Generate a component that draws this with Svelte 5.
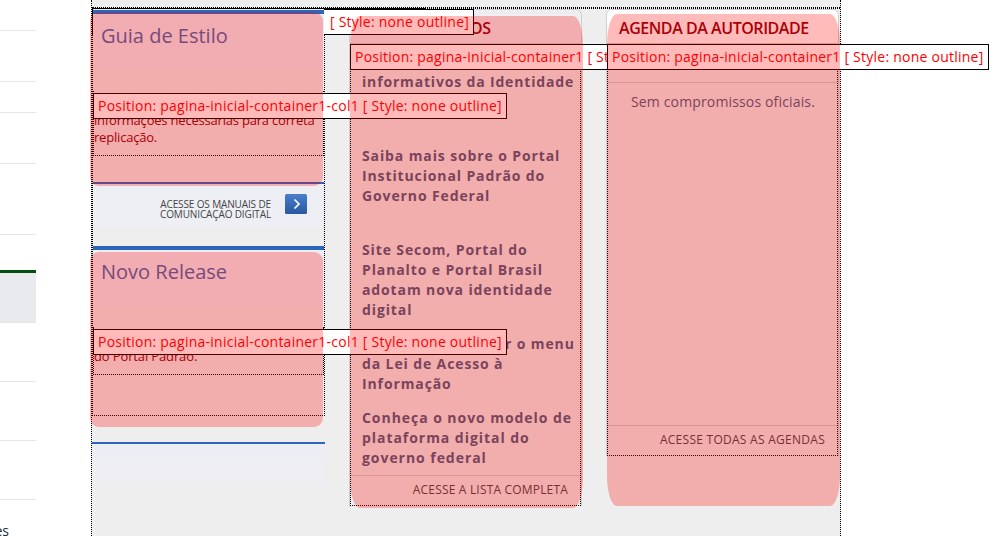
<script>
  const rows = [
    { h: 30 }, { h: 50 }, { h: 30 }, { h: 50 }, { h: 70 },
    { h: 35, plain: true },
    { h: 49, active: true },
    { h: 58 }, { h: 58 }, { h: 58 },
  ];
  const news = [
    { lines: ['Saiba mais sobre o Portal', 'Institucional Padrão do', 'Governo Federal'], gap: 34 },
    { lines: ['Site Secom, Portal do', 'Planalto e Portal Brasil', 'adotam nova identidade', 'digital'], gap: 14 },
    { lines: ['r o menu', 'da Lei de Acesso à', 'Informação'], gap: 14, indent: 143 },
    { lines: ['Conheça o novo modelo de', 'plataforma digital do', 'governo federal'], gap: 0, wide: true },
  ];
</script>

<div class="page">
  <nav>
    {#each rows as r}
      <div class="row" class:active={r.active} class:plain={r.plain} style:height="{r.h}px"></div>
    {/each}
    <span class="item">es</span>
  </nav>

  <main>
    <section class="col first">
      <div class="tiles">
        <article class="tile">
          <h2>Guia de Estilo</h2>
          <div class="body"><p>informações necessárias para correta<br />replicação.</p></div>
        </article>
        <div class="more">
          <span>ACESSE OS MANUAIS DE<br />COMUNICAÇÃO DIGITAL</span>
          <svg width="22" height="20" viewBox="0 0 22 20">
            <defs><linearGradient id="g" x2="0" y2="1"><stop stop-color="#4a7fcd" /><stop offset="1" stop-color="#2858a0" /></linearGradient></defs>
            <rect width="22" height="20" rx="1.5" fill="url(#g)" />
            <path d="M9.500 5.500 14 10l-4.500 4.500" fill="none" stroke="#fff" stroke-width="1.700" />
          </svg>
        </div>
        <article class="tile second">
          <h2>Novo Release</h2>
          <div class="body"><p>do Portal Padrão.</p></div>
        </article>
      </div>
      <div class="empty"></div>
    </section>

    <section class="col panel">
      <header class="tinted">OS</header>
      <div class="content">
        <b class="lead">informativos da Identidade</b>
        {#each news as n}
          <b class:wide={n.wide} style:margin-bottom="{n.gap}px">
            {#each n.lines as line, i}<span style:padding-left="{i === 0 && n.indent ? n.indent : 0}px">{line}</span>{/each}
          </b>
        {/each}
        <footer>ACESSE A LISTA COMPLETA</footer>
      </div>
    </section>

    <section class="col panel agenda">
      <header>AGENDA DA AUTORIDADE</header>
      <div class="content">
        <div class="date"></div>
        <p class="none">Sem compromissos oficiais.</p>
        <footer>ACESSE TODAS AS AGENDAS</footer>
      </div>
    </section>
  </main>

  <div class="edge"></div>
  <div class="tag t0"><span>[ Style: none outline]</span></div>
  <div class="tag t1"><span>Position: pagina-inicial-container1-col1 [ Style: none outline]</span></div>
  <div class="tag t2"><span>Position: pagina-inicial-container1-col1 [ Style: none outline]</span></div>
  <div class="tag t3"><span>Position: pagina-inicial-container1 [ Style: none outline]</span></div>
  <div class="tag t4"><span>Position: pagina-inicial-container1 [ Style: none outline]</span></div>
  <div class="mark m1"></div>
  <div class="mark m2"></div>
  <div class="mark m3"></div>
  <div class="mark m4"></div>
</div>

<style>
  * { box-sizing: border-box; margin: 0; }
  .page { position: relative; display: flex; width: 1003px; height: 536px; overflow: hidden; background: #fff; font: 14px/20px "Open Sans", sans-serif; white-space: nowrap; }
  nav { width: 36px; margin-right: 55px; overflow: hidden; }
  .row { box-sizing: content-box; border-bottom: 1px solid #e5e5e5; }
  .row.plain { border: 0; }
  .row.active { border-top: 3px solid #00500f; background: #e9eaee; }
  .item { display: block; width: 9px; margin-top: 21px; color: #172938; direction: rtl; }

  main { display: grid; grid-template-columns: 233px 233px 233px; grid-template-rows: 2px 1fr; column-gap: 24px; width: 750px; height: 536px; padding-top: 7px; background: #eee; border: 1px dotted #000; border-width: 0 1px; }
  main::before { content: ""; box-sizing: border-box; grid-column: 1 / 4; width: 748px; height: 2px; border: 1px dotted #000; border-width: 1px 0; }
  .tiles { height: 407px; padding-top: 1px; border: 1px dotted #000; border-top: 0; }
  .tile { height: 174px; border-top: 4px solid #2c66bc; border-bottom: 2px solid #2c66bc; background: linear-gradient(#eceef3 56px, #eee 56px); }
  .tile.second { height: 169px; border-bottom: 0; }
  h2 { height: 77px; padding: 9px 0 0 8px; font-size: 20px; line-height: 26px; font-weight: 400; color: #4566ab; }
  .body { height: 65px; padding-top: 21px; border: 1px dotted #000; border-top: 0; }
  .second .body { height: 48px; padding-top: 21px; }
  .body p { font-size: 13px; line-height: 17px; color: #8c0008; letter-spacing: -.2px; }
  .second p { letter-spacing: -.13px; }
  .more { display: flex; justify-content: flex-end; gap: 14px; height: 62px; padding: 10px 17px 0 0; background: linear-gradient(#edeff4 42px, #eee 42px); font-size: 10px; line-height: 10px; letter-spacing: -.13px; text-align: right; color: #444; }
  .more span { padding-top: 5px; }
  .empty { height: 45px; margin-top: 26px; border-top: 2px solid #2c66bc; background: linear-gradient(#edeef4, #eeeef2); }

  .panel { height: 497px; border: 1px solid #d0cece; border-bottom: 0; border-radius: 6px 6px 0 0; }
  header { height: 34px; padding: 8px 0 0 12px; border-bottom: 1px solid #ccc; border-radius: 5px 5px 0 0; background: #fff; color: #8b0009; font-size: 16px; line-height: 21px; font-weight: 600; letter-spacing: -.45px; }
  header.tinted { padding-left: 120px; background: #ededf2; }
  .content { display: flex; flex-direction: column; width: 231px; height: 462px; border: 1px dotted #000; border-top: 0; }
  .content b { display: flex; flex-direction: column; padding-left: 11px; color: #495d7e; letter-spacing: .88px; }
  .content .lead { margin: 28px 0 54px; letter-spacing: .83px; }
  .content .wide { letter-spacing: .95px; }
  footer { height: 30px; margin-top: auto; padding: 5px 12px 0 0; border-top: 1px solid #ccc; font-size: 12px; line-height: 18px; letter-spacing: .18px; text-align: right; color: #444; }
  .agenda { height: 447px; }
  .agenda .content { height: 412px; }
  .agenda footer { letter-spacing: .27px; }
  .date { height: 39px; border-bottom: 1px solid #ccc; }
  .none { margin-top: 9px; padding-left: 23px; color: #495d7e; letter-spacing: .15px; }

  .edge { position: absolute; left: 92px; top: 8px; width: 334px; height: 27px; border-top: 1px solid #000; border-left: 1px solid #000; pointer-events: none; }
  .tag { position: absolute; height: 26px; padding: 2px 4px; border: 1px solid #000; background: #fff; color: #f00; letter-spacing: .24px; }
  .t0 { left: 324px; top: 9px; width: 150px; padding-left: 6px; border-left: 0; }
  .t1, .t2 { left: 93px; width: 414px; }
  .t1 { top: 93px; }
  .t2 { top: 329px; }
  .t3, .t4 { top: 44px; width: 382px; }
  .t3 { left: 350px; }
  .t4 { left: 607px; }
  .mark { position: absolute; width: 233px; background: rgba(255, 0, 0, .27); border-radius: 9px; }
  .m1 { left: 90px; top: 12px; height: 174px; }
  .m2 { left: 90px; top: 252px; height: 175px; }
  .m3 { left: 350px; top: 16px; height: 492px; border-radius: 10px / 30px; }
  .m4 { left: 607px; top: 14px; height: 492px; border-radius: 10px / 30px; }
</style>
